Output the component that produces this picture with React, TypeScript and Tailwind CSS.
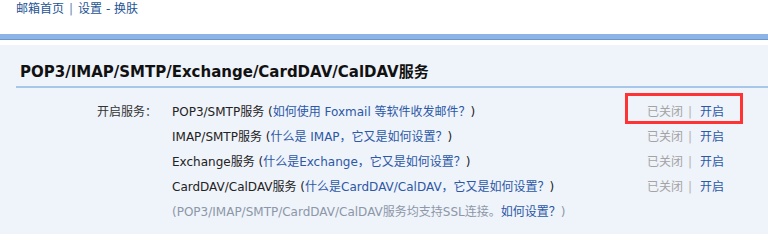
import React from "react";

const rows = [
  { name: "POP3/SMTP服务", help: "如何使用 Foxmail 等软件收发邮件？", marked: true },
  { name: "IMAP/SMTP服务", help: "什么是 IMAP，它又是如何设置？", marked: false },
  { name: "Exchange服务", help: "什么是Exchange，它又是如何设置？", marked: false },
  { name: "CardDAV/CalDAV服务", help: "什么是CardDAV/CalDAV，它又是如何设置？", marked: false },
];

const Status = ({ marked }: { marked: boolean }) => (
  <span className="relative w-[78px] whitespace-nowrap">
    <span className="text-[#a3a3a3]">已关闭</span>
    <span className="text-[#b5b5b5] mx-[5px]">|</span>
    <span className="text-[#2c58a6] ml-[3px]">开启</span>
    {marked && (
      <span className="absolute left-[-22px] top-[-7px] w-[118px] h-[31px] border-[3px] border-[#ff3333]" />
    )}
  </span>
);

const App = () => {
  return (
    <div
      className="w-full h-[234px] bg-white flex flex-col overflow-hidden"
      style={{ fontFamily: '"DejaVu Sans", "Noto Sans CJK SC", sans-serif' }}
    >
      <div className="h-[34px] px-4 text-[12px] leading-[19px] text-[#1e5494]">
        <span>邮箱首页</span>
        <span className="text-[#6a86b0] mx-[5px]">|</span>
        <span>设置 - 换肤</span>
      </div>
      <div className="h-[6px] bg-[#8db4e6] border-b border-[#6d97cb]" />
      <div className="h-[5px] bg-white" />
      <div className="flex-1 bg-[#eff3fa] flex flex-col">
        <div className="ml-4 mt-[17px] pl-1 pb-[4px] border-b-2 border-[#a8c6ea] text-[15px] leading-[20px] font-bold text-[#111]">
          POP3/IMAP/SMTP/Exchange/CardDAV/CalDAV服务
        </div>
        <div className="flex mt-[12px] text-[12px] leading-[25px]">
          <div className="w-[157px] text-right text-[#333]">开启服务：</div>
          <div className="flex-1 ml-[15px] flex flex-col pr-[43px]">
            {rows.map((r) => (
              <div key={r.name} className="flex justify-between items-center">
                <span className="text-[#222]">
                  {r.name} (<span className="text-[#2c58a6]">{r.help}</span>)
                </span>
                <Status marked={r.marked} />
              </div>
            ))}
            <div className="text-[#8c97a8]">
              (POP3/IMAP/SMTP/CardDAV/CalDAV服务均支持SSL连接。
              <span className="text-[#2c58a6]">如何设置？</span>)
            </div>
          </div>
        </div>
      </div>
    </div>
  );
};

export default App;
